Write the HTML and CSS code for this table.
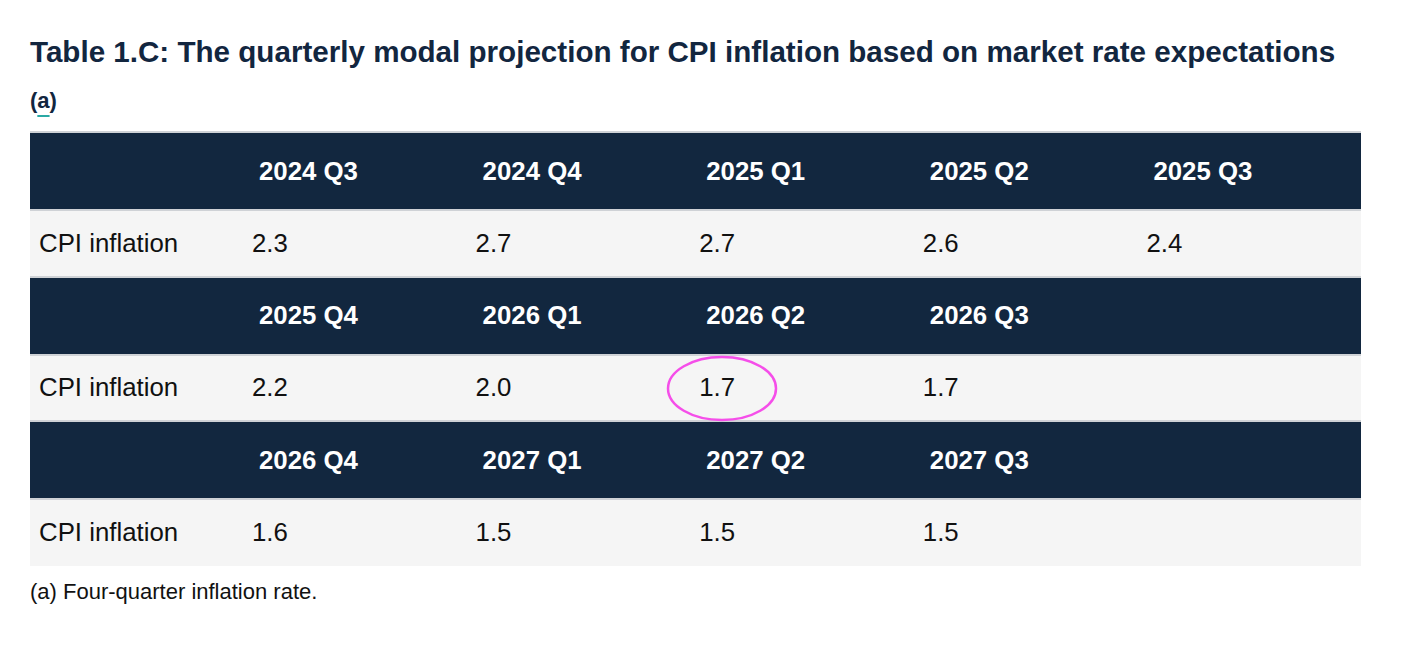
FILE: index.html
```html
<!DOCTYPE html>
<html lang="en">
<head>
<meta charset="utf-8">
<title>Table 1.C</title>
<link rel="stylesheet" href="styles.css">
</head>
<body>
<main class="page">
  <h2 class="title">Table 1.C: The quarterly modal projection for CPI inflation based on market rate expectations</h2>
  <div class="note-ref">(<span class="link">a</span>)</div>
  <table class="proj">
    <colgroup>
      <col class="c-label"><col><col><col><col><col>
    </colgroup>
    <tbody>
      <tr class="head"><th></th><th>2024 Q3</th><th>2024 Q4</th><th>2025 Q1</th><th>2025 Q2</th><th>2025 Q3</th></tr>
      <tr class="data"><td>CPI inflation</td><td>2.3</td><td>2.7</td><td>2.7</td><td>2.6</td><td>2.4</td></tr>
      <tr class="head"><th></th><th>2025 Q4</th><th>2026 Q1</th><th>2026 Q2</th><th>2026 Q3</th><th></th></tr>
      <tr class="data"><td>CPI inflation</td><td>2.2</td><td>2.0</td><td><span class="circled">1.7<svg class="ring" width="114" height="69" viewBox="0 0 114 69"><ellipse cx="57" cy="34.5" rx="54" ry="31.5" fill="none" stroke="#f54ee9" stroke-width="2.5"/></svg></span></td><td>1.7</td><td></td></tr>
      <tr class="head"><th></th><th>2026 Q4</th><th>2027 Q1</th><th>2027 Q2</th><th>2027 Q3</th><th></th></tr>
      <tr class="data"><td>CPI inflation</td><td>1.6</td><td>1.5</td><td>1.5</td><td>1.5</td><td></td></tr>
    </tbody>
  </table>
  <p class="footnote">(a) Four-quarter inflation rate.</p>
</main>
</body>
</html>
```

FILE: styles.css
```css
html, body {
  margin: 0;
  padding: 0;
  background: #ffffff;
}

body {
  font-family: "Liberation Sans", Arial, sans-serif;
  color: #111111;
}

.page {
  padding: 32px 51px 0 30px;
}

.title {
  margin: 0;
  font-size: 29.6px;
  line-height: 40px;
  font-weight: 700;
  color: #12263f;
}

.note-ref {
  margin-top: 14px;
  font-size: 22px;
  line-height: 30px;
  font-weight: 700;
  color: #12263f;
  margin-bottom: 15px;
}

.note-ref .link {
  text-decoration: underline;
  text-decoration-color: #2aa9a4;
  text-decoration-thickness: 2px;
  text-underline-offset: 7px;
}

.proj {
  width: 1331px;
  border-collapse: collapse;
  table-layout: fixed;
}

.c-label {
  width: 213px;
}

.proj tr {
  border-top: 2px solid #cfd2d6;
}

.head {
  background: #12273f;
  color: #ffffff;
}

.head th {
  height: 78px;
  box-sizing: border-box;
  text-align: left;
  font-size: 25.8px;
  font-weight: 700;
  padding: 0 0 0 16px;
}

.data {
  background: #f5f5f5;
}

.data td {
  height: 66.5px;
  box-sizing: border-box;
  font-size: 25.8px;
  padding: 0 0 0 9px;
}

.circled {
  position: relative;
  display: inline-block;
}

.ring {
  position: absolute;
  left: -34px;
  top: -19px;
}

.footnote {
  margin: 13px 0 0;
  font-size: 22px;
  line-height: 26px;
}
```
